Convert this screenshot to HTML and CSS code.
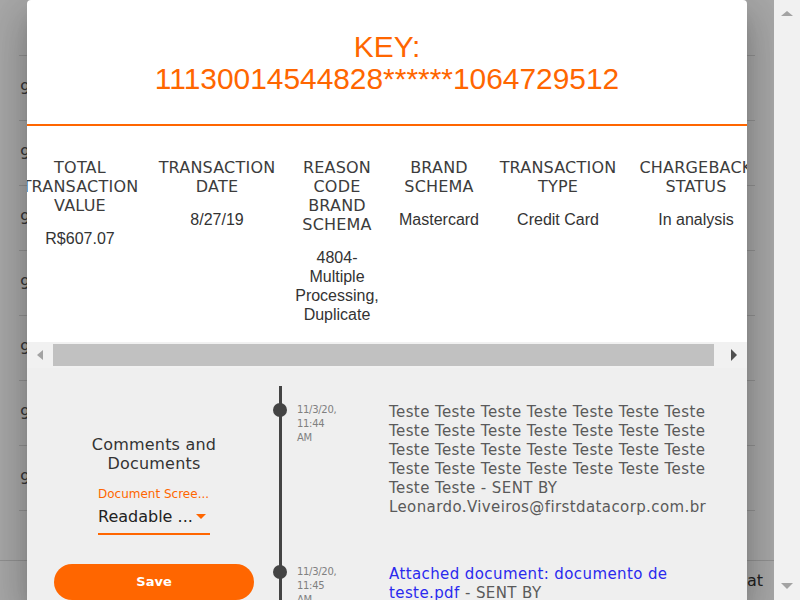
FILE: index.html
```html
<!DOCTYPE html>
<html lang="en">
<head>
<meta charset="utf-8">
<title>Chargeback detail</title>
<link rel="stylesheet" href="styles.css">
</head>
<body>
<div class="viewport">
  <div class="page">
    <div class="bg-list">
      <div class="bg-row bg-head"></div>
      <div class="bg-row">9/27/19</div>
      <div class="bg-row">9/27/19</div>
      <div class="bg-row">9/27/19</div>
      <div class="bg-row">9/27/19</div>
      <div class="bg-row">9/27/19</div>
      <div class="bg-row">9/27/19</div>
      <div class="bg-row">9/27/19</div>
    </div>
    <div class="bg-footer"><span>Export format</span></div>
  </div>

  <div class="overlay">
    <div class="modal">
      <header class="key">KEY:<br>11130014544828******1064729512</header>

      <div class="table-view">
        <div class="cols">
          <div class="col c1"><div class="th">TOTAL TRANSACTION VALUE</div><div class="td">R$607.07</div></div>
          <div class="col c2"><div class="th">TRANSACTION DATE</div><div class="td">8/27/19</div></div>
          <div class="col c3"><div class="th">REASON CODE BRAND SCHEMA</div><div class="td">4804- Multiple Processing, Duplicate</div></div>
          <div class="col c4"><div class="th">BRAND SCHEMA</div><div class="td">Mastercard</div></div>
          <div class="col c5"><div class="th">TRANSACTION TYPE</div><div class="td">Credit Card</div></div>
          <div class="col c6"><div class="th">CHARGEBACK STATUS</div><div class="td">In analysis</div></div>
        </div>
      </div>

      <div class="hscroll">
        <span class="hbtn"><i class="tri-left"></i></span>
        <span class="track"><span class="thumb"></span></span>
        <span class="hbtn"><i class="tri-right"></i></span>
      </div>

      <section class="comments">
        <div class="side">
          <h2 class="side-title">Comments and Documents</h2>
          <div class="field">
            <div class="field-label">Document Scree...</div>
            <div class="select"><span class="select-value">Readable ...</span><i class="caret"></i></div>
          </div>
          <button class="save">Save</button>
        </div>

        <div class="timeline">
          <div class="entry">
            <div class="date">11/3/20, 11:44 AM</div>
            <div class="msg">Teste Teste Teste Teste Teste Teste Teste Teste Teste Teste Teste Teste Teste Teste Teste Teste Teste Teste Teste Teste Teste Teste Teste Teste Teste Teste Teste Teste Teste Teste - SENT BY Leonardo.Viveiros@firstdatacorp.com.br</div>
          </div>
          <div class="entry">
            <div class="date">11/3/20, 11:45 AM</div>
            <div class="msg"><a class="doc-link" href="#">Attached document: documento de teste.pdf</a> - SENT BY Leonardo.Viveiros@firstdatacorp.com.br</div>
          </div>
        </div>
      </section>
    </div>
  </div>
</div>
<div class="vscroll"><i class="tri-up"></i><i class="tri-down"></i></div>
</body>
</html>
```

FILE: styles.css
```css
* { box-sizing: border-box; }

html, body {
  margin: 0;
  height: 600px;
  overflow: hidden;
}

body {
  display: flex;
  font-family: "Liberation Sans", Arial, sans-serif;
  background: #fff;
}

.viewport {
  position: relative;
  flex: 1;
  height: 600px;
  overflow: hidden;
}

/* ---------- background page ---------- */
.page {
  height: 600px;
  display: flex;
  flex-direction: column;
}

.bg-list {
  width: 736px;
  margin: 0 auto;
}

.bg-row {
  height: 65px;
  border-bottom: 1px solid #dcdcdc;
  display: flex;
  align-items: center;
  padding-left: 1px;
  font: 16px "DejaVu Sans", sans-serif;
  color: #555;
}

.bg-head { height: 56px; }

.bg-footer {
  margin-top: auto;
  height: 40px;
  border-top: 1px solid #dcdcdc;
  display: flex;
  align-items: center;
  justify-content: flex-end;
  padding-right: 11px;
  font: 16px "DejaVu Sans", sans-serif;
  color: #333;
}

/* ---------- overlay + modal ---------- */
.overlay {
  position: absolute;
  inset: 0;
  background: rgba(0, 0, 0, 0.34);
  display: flex;
  justify-content: center;
  align-items: flex-start;
}

.modal {
  width: 720px;
  height: 600px;
  background: #fff;
  border-radius: 4px 4px 0 0;
  overflow: hidden;
  display: flex;
  flex-direction: column;
  box-shadow: 0 11px 15px -7px rgba(0,0,0,.2), 0 24px 38px 3px rgba(0,0,0,.14), 0 9px 46px 8px rgba(0,0,0,.12);
}

.key {
  flex: none;
  font: 29.9px/32px "Liberation Sans", Arial, sans-serif;
  color: #ff6600;
  text-align: center;
  padding: 31px 0 29px;
  border-bottom: 2px solid #ff6600;
}

/* ---------- detail table ---------- */
.table-view {
  flex: none;
  height: 216px;
  overflow: hidden;
  background: #fff;
}

.cols {
  display: flex;
  margin-left: -15px;
  padding-top: 32px;
}

.col {
  flex: none;
  padding: 0 4px;
  text-align: center;
}

.c1 { width: 136px; }
.c2 { width: 138px; }
.c3 { width: 102px; }
.c4 { width: 102px; }
.c5 { width: 136px; }
.c6 { width: 140px; }

.th {
  font: 16px/19px "DejaVu Sans", sans-serif;
  letter-spacing: 0.2px;
  color: #3c3c3c;
}

.td {
  margin-top: 14px;
  font: 16px/19px "Liberation Sans", Arial, sans-serif;
  color: #333;
}

/* ---------- horizontal scrollbar ---------- */
.hscroll {
  flex: none;
  height: 26px;
  background: #f1f1f1;
  display: flex;
}

.hbtn {
  width: 26px;
  display: flex;
  align-items: center;
  justify-content: center;
}

.tri-left {
  width: 0; height: 0;
  border-top: 5px solid transparent;
  border-bottom: 5px solid transparent;
  border-right: 6px solid #a3a3a3;
}

.tri-right {
  width: 0; height: 0;
  border-top: 6px solid transparent;
  border-bottom: 6px solid transparent;
  border-left: 6px solid #505050;
}

.track {
  flex: 1;
  padding: 2px 7px 2px 0;
}

.thumb {
  display: block;
  height: 22px;
  background: #c1c1c1;
}

/* ---------- comments area ---------- */
.comments {
  flex: 1;
  background: #efefef;
  display: flex;
  align-items: flex-start;
  padding-left: 27px;
}

.side {
  flex: none;
  width: 200px;
  padding-top: 67px;
  display: flex;
  flex-direction: column;
  align-items: center;
}

.side-title {
  margin: 0;
  font: normal 16px/19px "DejaVu Sans", sans-serif;
  letter-spacing: 0.2px;
  color: #333;
  text-align: center;
}

.field {
  margin-top: 14px;
  width: 112px;
}

.field-label {
  font: 12px/14px "DejaVu Sans", sans-serif;
  color: #ff6600;
  white-space: nowrap;
  overflow: hidden;
}

.select {
  margin-top: 6px;
  height: 28px;
  border-bottom: 2px solid #ff6600;
  display: flex;
  justify-content: space-between;
  align-items: flex-start;
}

.select-value {
  font: 16px/20px "DejaVu Sans", sans-serif;
  color: #222;
  white-space: nowrap;
}

.caret {
  margin: 7px 4px 0 0;
  width: 0; height: 0;
  border-left: 5px solid transparent;
  border-right: 5px solid transparent;
  border-top: 5px solid #ff6600;
}

.save {
  margin-top: 28.5px;
  width: 200px;
  height: 36px;
  border: 0;
  border-radius: 18px;
  background: #ff6600;
  color: #fff;
  font: bold 13px "DejaVu Sans", sans-serif;
}

/* ---------- timeline ---------- */
.timeline {
  margin-left: 25px;
  margin-top: 18px;
  padding: 16.5px 0 0 15px;
  border-left: 3px solid #444;
  align-self: stretch;
}

.entry {
  position: relative;
  display: flex;
  align-items: flex-start;
  margin-bottom: 48px;
}

.entry::before {
  content: "";
  position: absolute;
  left: -24px;
  top: 0;
  width: 14px;
  height: 14px;
  border-radius: 50%;
  background: #444;
}

.date {
  flex: none;
  width: 42px;
  margin-right: 50px;
  font: 10px/14px "DejaVu Sans", sans-serif;
  letter-spacing: -0.3px;
  color: #808080;
}

.msg {
  width: 340px;
  font: 15px/19px "DejaVu Sans", sans-serif;
  letter-spacing: 0.4px;
  color: #5a5a5a;
}

.doc-link {
  color: #2a2aee;
  text-decoration: none;
}

/* ---------- page scrollbar ---------- */
.vscroll {
  flex: none;
  width: 26px;
  height: 600px;
  background: #f1f1f1;
  display: flex;
  flex-direction: column;
  justify-content: space-between;
  align-items: center;
  padding: 11px 0;
}

.tri-up {
  width: 0; height: 0;
  border-left: 6px solid transparent;
  border-right: 6px solid transparent;
  border-bottom: 5px solid #a3a3a3;
}

.tri-down {
  width: 0; height: 0;
  border-left: 6px solid transparent;
  border-right: 6px solid transparent;
  border-top: 6px solid #a3a3a3;
}
```
